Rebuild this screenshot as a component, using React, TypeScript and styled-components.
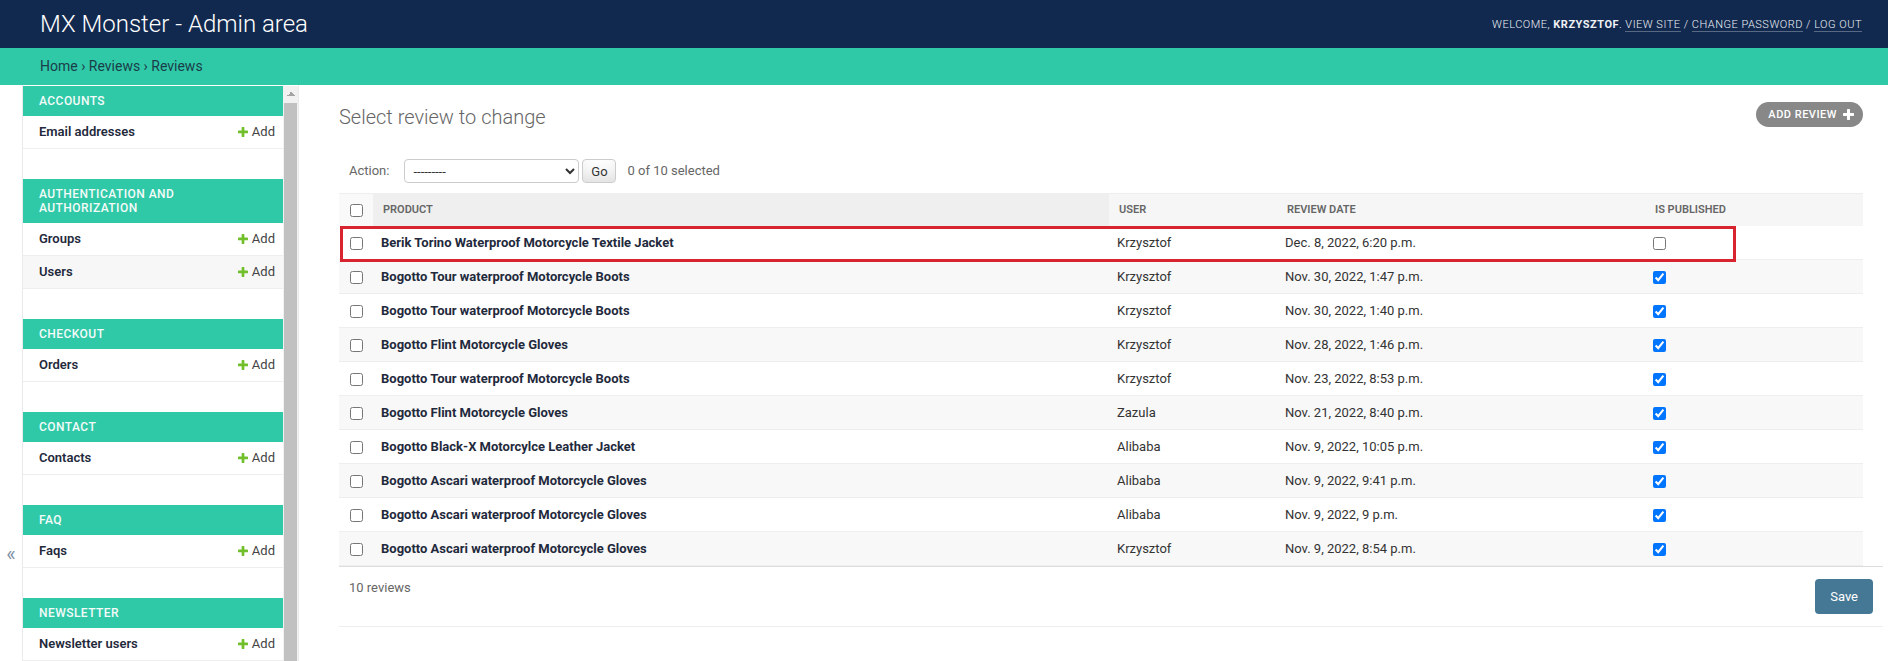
import React from "react";
import styled, { createGlobalStyle } from "styled-components";

const GlobalStyle = createGlobalStyle`
  html, body { margin: 0; padding: 0; overflow: hidden; }
  body {
    font-family: Roboto, "Liberation Sans", Arial, sans-serif;
    font-size: 14px;
    color: #333;
    background: #fff;
  }
`;

const NAVY = "#12294f";
const TEAL = "#30c9a8";
const LINK = "#1f2a3c";

const Page = styled.div`
  width: 100%;
`;

const Header = styled.header`
  height: 48px;
  padding: 0 26px 0 40px;
  background: ${NAVY};
  display: flex;
  align-items: center;
  justify-content: space-between;
`;

const Branding = styled.h1`
  margin: 0;
  font-size: 24px;
  font-weight: 300;
  color: #fff;
`;

const UserTools = styled.div`
  font-size: 11px;
  font-weight: 300;
  letter-spacing: 0.5px;
  text-transform: uppercase;
  color: #eef1f6;
  white-space: nowrap;
  strong { font-weight: 700; }
`;

const UserLink = styled.a`
  color: inherit;
  text-decoration: none;
  border-bottom: 1px solid rgba(255, 255, 255, 0.3);
`;

const Breadcrumbs = styled.div`
  background: ${TEAL};
  padding: 10px 40px;
  font-size: 14px;
  line-height: 17px;
  color: #1a3d48;
`;

const Main = styled.div`
  display: flex;
  align-items: stretch;
`;

const ToggleNav = styled.button`
  flex: 0 0 23px;
  width: 23px;
  box-sizing: border-box;
  border: 0;
  border-right: 1px solid #eaeaea;
  background: #fff;
  padding: 455px 0 0;
  font-family: inherit;
  font-size: 20px;
  line-height: 28px;
  color: #7d90a4;
  display: flex;
  justify-content: center;
  align-items: flex-start;
`;

const NavSidebar = styled.nav`
  flex: 0 0 275px;
  width: 275px;
  height: 100vh;
  border-top: 1px solid transparent;
  border-right: 1px solid #eaeaea;
  overflow: hidden;
  background: #fff;
  display: flex;
  align-items: stretch;
`;

const ModuleList = styled.div`
  flex: 1 1 auto;
  min-width: 0;
`;

const ScrollTrack = styled.div`
  flex: 0 0 15px;
  display: flex;
  flex-direction: column;
  background: #f1f1f1;
`;

const ScrollArrow = styled.div`
  flex: 0 0 15px;
  background-image: linear-gradient(to bottom right, transparent 50%, #a3a3a3 50%),
    linear-gradient(to bottom left, transparent 50%, #a3a3a3 50%);
  background-size: 4px 4px;
  background-repeat: no-repeat;
  background-position: 4px 6px, 8px 6px;
`;

const ScrollThumb = styled.div`
  flex: 0 0 620px;
  margin: 2px 1px 0;
  background: #c1c1c1;
`;

const Module = styled.section`
  margin-bottom: 30px;
`;

const ModuleCaption = styled.div`
  background: ${TEAL};
  color: #f4fbf9;
  padding: 8px 8px 8px 16px;
  font-size: 12px;
  line-height: 14px;
  font-weight: 500;
  letter-spacing: 0.45px;
  text-transform: uppercase;
  white-space: pre-line;
`;

const ModuleRow = styled.div<{ $even?: boolean }>`
  display: flex;
  justify-content: space-between;
  align-items: flex-start;
  border-bottom: 1px solid #eee;
  background: ${(p) => (p.$even ? "#f7f7f7" : "#fff")};
`;

const ModelName = styled.a`
  padding: 8px 8px 8px 16px;
  font-size: 13px;
  line-height: 16px;
  font-weight: 600;
  color: ${LINK};
  text-decoration: none;
`;

const AddLink = styled.a`
  padding: 8px;
  display: inline-flex;
  align-items: center;
  gap: 4px;
  font-size: 13px;
  line-height: 16px;
  color: #444;
  text-decoration: none;
  white-space: nowrap;
`;

const Content = styled.div`
  flex: 1 1 auto;
  min-width: 0;
  padding: 20px 25px 20px 40px;
`;

const TitleRow = styled.div`
  display: flex;
  justify-content: space-between;
  align-items: flex-start;
  margin-bottom: 20px;
`;

const Title = styled.h1`
  margin: 0;
  font-size: 20px;
  font-weight: 300;
  color: #666;
`;

const AddButton = styled.a`
  margin-top: -3px;
  height: 25px;
  box-sizing: border-box;
  padding: 0 9px 0 12px;
  display: inline-flex;
  align-items: center;
  gap: 6px;
  background: #888;
  border-radius: 15px;
  color: #fff;
  font-size: 11px;
  font-weight: 500;
  letter-spacing: 0.5px;
  text-transform: uppercase;
  text-decoration: none;
`;

const Actions = styled.div`
  padding: 10px;
  display: flex;
  align-items: center;
  line-height: 24px;
  font-size: 13px;
  color: #666;
`;

const ActionLabel = styled.label`
  margin-right: 15px;
`;

const ActionSelect = styled.select`
  width: 175px;
  height: 24px;
  box-sizing: border-box;
  border: 1px solid #ccc;
  border-radius: 4px;
  background: #fff;
  color: #333;
  font-family: inherit;
  font-size: 13px;
  padding: 0 2px 0 4px;
  margin: 0;
`;

const GoButton = styled.button`
  margin-left: 3px;
  height: 24px;
  width: 34px;
  box-sizing: border-box;
  padding: 0;
  border: 1px solid #ccc;
  border-radius: 4px;
  background: #fff;
  box-shadow: 0 -15px 20px -10px rgba(0, 0, 0, 0.15) inset;
  color: #333;
  font-family: inherit;
  font-size: 13px;
`;

const Counter = styled.span`
  margin-left: 11px;
`;

const Results = styled.div`
  position: relative;
`;

const Table = styled.table`
  width: 100%;
  border-collapse: collapse;
  table-layout: fixed;
`;

const HeadCell = styled.th<{ $sorted?: boolean; $check?: boolean }>`
  padding: ${(p) => (p.$check ? "8px 0" : "8px 10px")};
  text-align: ${(p) => (p.$check ? "center" : "left")};
  line-height: 16px;
  font-size: 11px;
  font-weight: 600;
  text-transform: uppercase;
  color: #666;
  border-top: 1px solid #eee;
  background: ${(p) => (p.$sorted ? "#efefef" : p.$check ? "#f9f9f9" : "#f6f6f6")};
  white-space: nowrap;
`;

const Row = styled.tr<{ $even?: boolean }>`
  background: ${(p) => (p.$even ? "#f8f8f8" : "#fff")};
`;

const Cell = styled.td<{ $check?: boolean }>`
  padding: ${(p) => (p.$check ? "8px 0" : "8px")};
  text-align: ${(p) => (p.$check ? "center" : "left")};
  line-height: 17px;
  font-size: 13px;
  color: #333;
  border-bottom: 1px solid #eee;
  vertical-align: middle;
  white-space: nowrap;
`;

const ProductLink = styled.a`
  font-weight: 700;
  color: ${LINK};
  text-decoration: none;
`;

const Check = styled.input`
  margin: 0;
  width: 13px;
  height: 13px;
  vertical-align: middle;
`;

const RedMark = styled.div`
  position: absolute;
  left: 1px;
  top: 33px;
  width: 1396px;
  height: 36px;
  box-sizing: border-box;
  border: 3px solid #d8242e;
  pointer-events: none;
`;

const Paginator = styled.div`
  width: 100%;
  padding: 10px 10px 12px;
  border-top: 1px solid #ddd;
  border-bottom: 1px solid #eee;
  display: flex;
  justify-content: space-between;
  align-items: flex-start;
  font-size: 13px;
  line-height: 22px;
  color: #666;
`;

const SaveButton = styled.button`
  margin-top: 2px;
  height: 35px;
  padding: 0 15px;
  border: 0;
  border-radius: 4px;
  background: #457894;
  color: #fff;
  font-family: inherit;
  font-size: 13px;
`;

const PlusIcon = ({ color, size }: { color: string; size: number }) => (
  <svg width={size} height={size} viewBox="192 192 1408 1408" aria-hidden="true">
    <path
      fill={color}
      d="M1600 796v192q0 40-28 68t-68 28h-416v416q0 40-28 68t-68 28h-192q-40 0-68-28t-28-68v-416h-416q-40 0-68-28t-28-68v-192q0-40 28-68t68-28h416v-416q0-40 28-68t68-28h192q40 0 68 28t28 68v416h416q40 0 68 28t28 68z"
    />
  </svg>
);

const modules: { title: string; models: string[] }[] = [
  { title: "Accounts", models: ["Email addresses"] },
  { title: "Authentication and\nAuthorization", models: ["Groups", "Users"] },
  { title: "Checkout", models: ["Orders"] },
  { title: "Contact", models: ["Contacts"] },
  { title: "FAQ", models: ["Faqs"] },
  { title: "Newsletter", models: ["Newsletter users"] },
];

const reviews = [
  ["Berik Torino Waterproof Motorcycle Textile Jacket", "Krzysztof", "Dec. 8, 2022, 6:20 p.m.", false],
  ["Bogotto Tour waterproof Motorcycle Boots", "Krzysztof", "Nov. 30, 2022, 1:47 p.m.", true],
  ["Bogotto Tour waterproof Motorcycle Boots", "Krzysztof", "Nov. 30, 2022, 1:40 p.m.", true],
  ["Bogotto Flint Motorcycle Gloves", "Krzysztof", "Nov. 28, 2022, 1:46 p.m.", true],
  ["Bogotto Tour waterproof Motorcycle Boots", "Krzysztof", "Nov. 23, 2022, 8:53 p.m.", true],
  ["Bogotto Flint Motorcycle Gloves", "Zazula", "Nov. 21, 2022, 8:40 p.m.", true],
  ["Bogotto Black-X Motorcylce Leather Jacket", "Alibaba", "Nov. 9, 2022, 10:05 p.m.", true],
  ["Bogotto Ascari waterproof Motorcycle Gloves", "Alibaba", "Nov. 9, 2022, 9:41 p.m.", true],
  ["Bogotto Ascari waterproof Motorcycle Gloves", "Alibaba", "Nov. 9, 2022, 9 p.m.", true],
  ["Bogotto Ascari waterproof Motorcycle Gloves", "Krzysztof", "Nov. 9, 2022, 8:54 p.m.", true],
] as const;

export default function App() {
  return (
    <Page>
      <GlobalStyle />
      <Header>
        <Branding>MX Monster - Admin area</Branding>
        <UserTools>
          Welcome, <strong>Krzysztof</strong>. <UserLink href="#">View site</UserLink> /{" "}
          <UserLink href="#">Change password</UserLink> / <UserLink href="#">Log out</UserLink>
        </UserTools>
      </Header>
      <Breadcrumbs>Home › Reviews › Reviews</Breadcrumbs>
      <Main>
        <ToggleNav type="button">«</ToggleNav>
        <NavSidebar>
          <ModuleList>
            {modules.map((m) => (
              <Module key={m.title}>
                <ModuleCaption>{m.title}</ModuleCaption>
                {m.models.map((name, i) => (
                  <ModuleRow key={name} $even={i % 2 === 1}>
                    <ModelName href="#">{name}</ModelName>
                    <AddLink href="#">
                      <PlusIcon color="#70bf2b" size={10} />
                      Add
                    </AddLink>
                  </ModuleRow>
                ))}
              </Module>
            ))}
          </ModuleList>
          <ScrollTrack>
            <ScrollArrow />
            <ScrollThumb />
          </ScrollTrack>
        </NavSidebar>
        <Content>
          <TitleRow>
            <Title>Select review to change</Title>
            <AddButton href="#">
              Add review
              <PlusIcon color="#fff" size={11} />
            </AddButton>
          </TitleRow>
          <Actions>
            <ActionLabel>Action:</ActionLabel>
            <ActionSelect defaultValue="">
              <option value="">---------</option>
              <option value="delete">Delete selected reviews</option>
            </ActionSelect>
            <GoButton type="button">Go</GoButton>
            <Counter>0 of 10 selected</Counter>
          </Actions>
          <Results>
            <Table>
              <colgroup>
                <col style={{ width: 34 }} />
                <col style={{ width: 736 }} />
                <col style={{ width: 168 }} />
                <col style={{ width: 368 }} />
                <col />
              </colgroup>
              <thead>
                <tr>
                  <HeadCell $check>
                    <Check type="checkbox" />
                  </HeadCell>
                  <HeadCell $sorted>Product</HeadCell>
                  <HeadCell>User</HeadCell>
                  <HeadCell>Review date</HeadCell>
                  <HeadCell>Is published</HeadCell>
                </tr>
              </thead>
              <tbody>
                {reviews.map(([product, user, date, published], i) => (
                  <Row key={i} $even={i % 2 === 1}>
                    <Cell $check>
                      <Check type="checkbox" />
                    </Cell>
                    <Cell>
                      <ProductLink href="#">{product}</ProductLink>
                    </Cell>
                    <Cell>{user}</Cell>
                    <Cell>{date}</Cell>
                    <Cell>
                      <Check type="checkbox" defaultChecked={published} />
                    </Cell>
                  </Row>
                ))}
              </tbody>
            </Table>
            <RedMark />
            <Paginator>
              <span>10 reviews</span>
              <SaveButton type="button">Save</SaveButton>
            </Paginator>
          </Results>
        </Content>
      </Main>
    </Page>
  );
}
